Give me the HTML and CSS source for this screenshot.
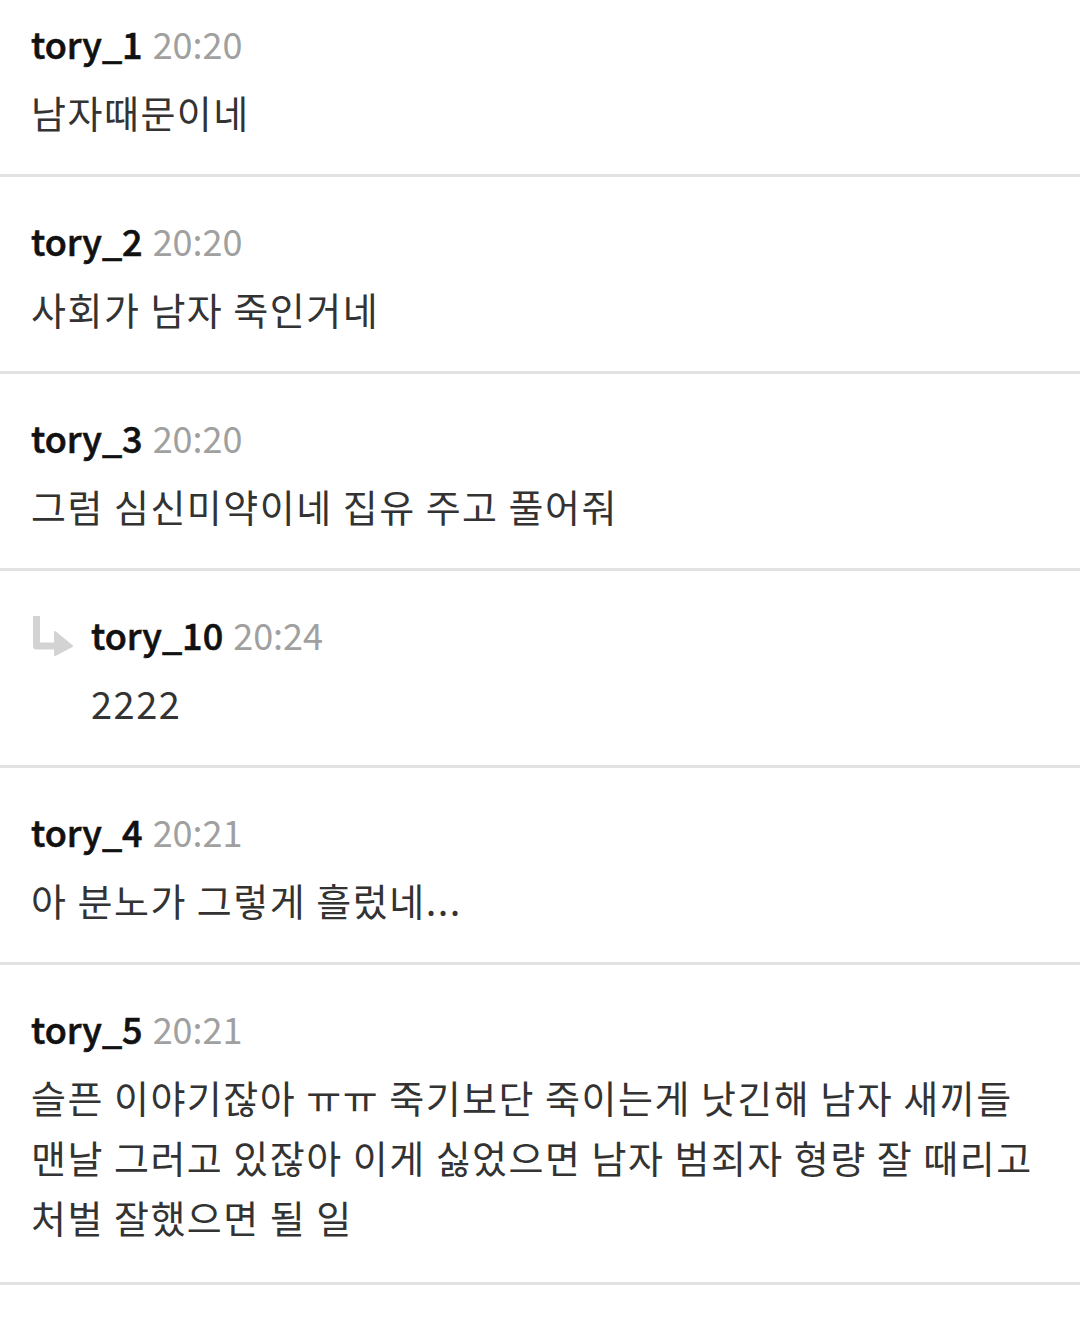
FILE: index.html
```html
<!DOCTYPE html>
<html>
<head>
  <meta charset="utf-8">
  <link rel="stylesheet" href="styles.css">
</head>
<body>
  <div class="comment-list">
    <div class="comment">
      <div class="comment-head"><span class="nick">tory_1</span><span class="time">20:20</span></div>
      <div class="comment-body">남자때문이네</div>
    </div>
    <div class="comment">
      <div class="comment-head"><span class="nick">tory_2</span><span class="time">20:20</span></div>
      <div class="comment-body">사회가 남자 죽인거네</div>
    </div>
    <div class="comment">
      <div class="comment-head"><span class="nick">tory_3</span><span class="time">20:20</span></div>
      <div class="comment-body">그럼 심신미약이네 집유 주고 풀어줘</div>
    </div>
    <div class="comment reply">
      <svg class="reply-icon" width="42" height="42" viewBox="0 0 42 42">
        <path d="M5.5 2 V32 H27" fill="none" stroke="#d3d3d3" stroke-width="7" stroke-linejoin="round"/>
        <path d="M24 18 L41 32 L24 41 Z" fill="#d3d3d3" stroke="#d3d3d3" stroke-width="2" stroke-linejoin="round"/>
      </svg>
      <div class="reply-content">
        <div class="comment-head"><span class="nick">tory_10</span><span class="time">20:24</span></div>
        <div class="comment-body">2222</div>
      </div>
    </div>
    <div class="comment">
      <div class="comment-head"><span class="nick">tory_4</span><span class="time">20:21</span></div>
      <div class="comment-body">아 분노가 그렇게 흘렀네...</div>
    </div>
    <div class="comment">
      <div class="comment-head"><span class="nick">tory_5</span><span class="time">20:21</span></div>
      <div class="comment-body">슬픈 이야기잖아 ㅠㅠ 죽기보단 죽이는게 낫긴해 남자 새끼들<br>맨날 그러고 있잖아 이게 싫었으면 남자 범죄자 형량 잘 때리고<br>처벌 잘했으면 될 일</div>
    </div>
  </div>
</body>
</html>
```

FILE: styles.css
```css
body {
  margin: 0;
  background: #fff;
  font-family: "Noto Sans CJK KR", "Noto Sans", sans-serif;
  font-size: 36px;
}

.comment-list {
  margin-top: -20px;
}

.comment {
  padding: 39px 31px 32px;
  border-bottom: 3px solid #e2e2e2;
}

.comment:last-child {
  padding-bottom: 35px;
}

.comment-head {
  line-height: 48px;
  white-space: nowrap;
}

.nick {
  color: #111;
  font-weight: 500;
  -webkit-text-stroke: 0.6px #111;
}

.time {
  color: #a0a0a0;
  margin-left: 10px;
}

.comment-body {
  margin-top: 15px;
  line-height: 60px;
  font-size: 38px;
  letter-spacing: 1.5px;
  color: #333;
  white-space: nowrap;
}

.reply {
  display: flex;
  align-items: flex-start;
}

.reply-icon {
  margin-top: 4px;
  flex-shrink: 0;
}

.reply-content {
  margin-left: 18px;
}
```
